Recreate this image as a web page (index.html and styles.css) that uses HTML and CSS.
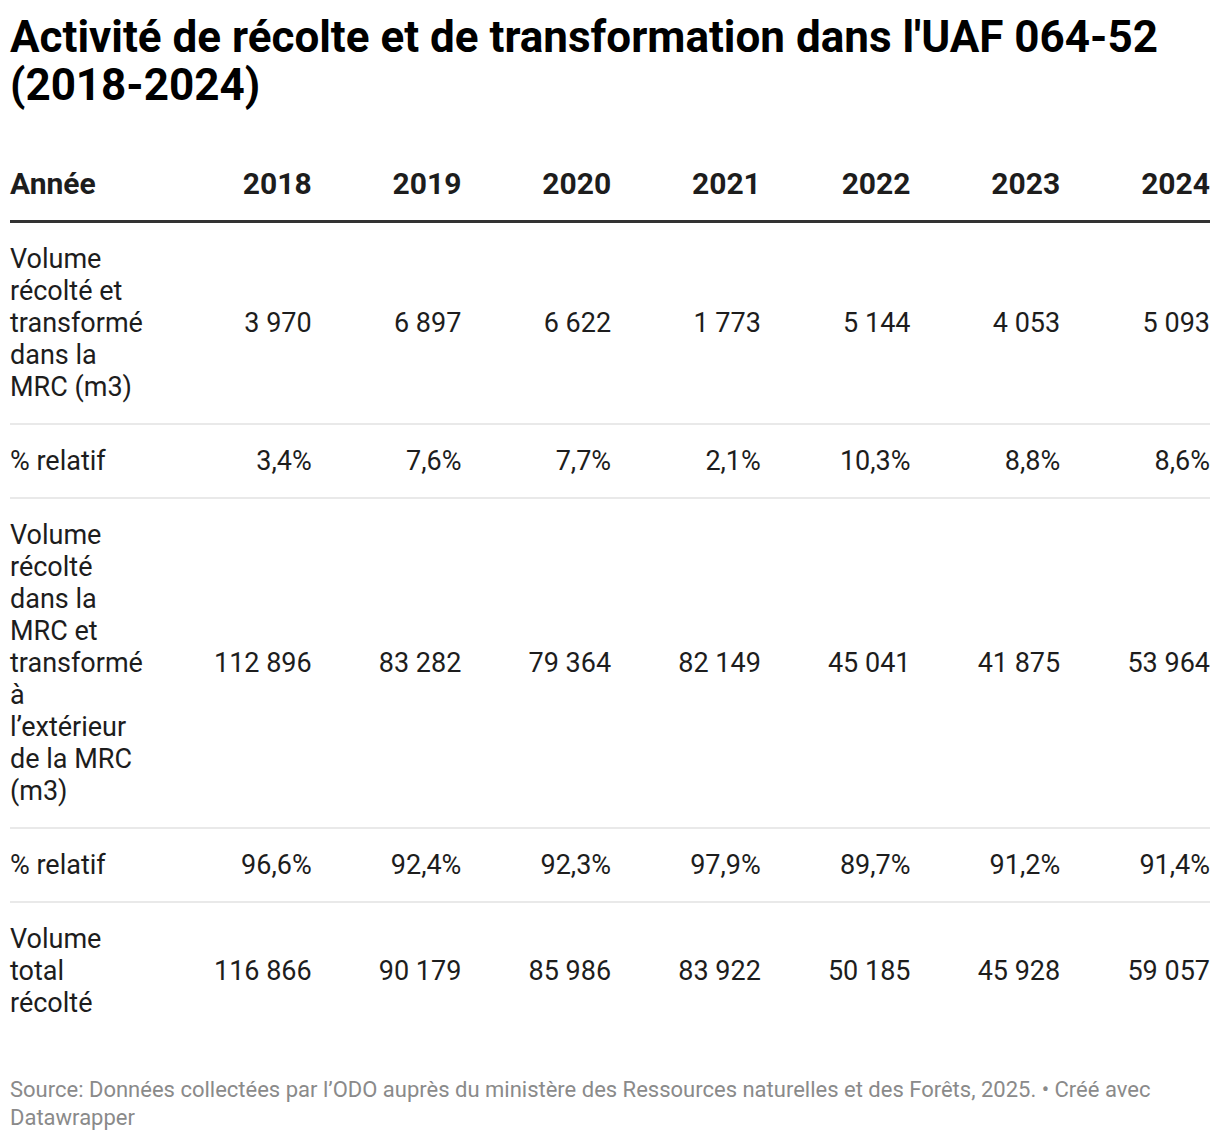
FILE: index.html
```html
<!DOCTYPE html>
<html lang="fr">
<head>
<meta charset="utf-8">
<title>Activité de récolte et de transformation</title>
<link rel="stylesheet" href="styles.css">
</head>
<body>
<div class="chart">
  <h1 class="title">Activité de récolte et de transformation dans l'UAF 064-52 (2018-2024)</h1>
  <table class="data">
    <colgroup>
      <col class="col-label">
      <col><col><col><col><col><col><col>
    </colgroup>
    <thead>
      <tr>
        <th class="label">Année</th>
        <th>2018</th><th>2019</th><th>2020</th><th>2021</th><th>2022</th><th>2023</th><th>2024</th>
      </tr>
    </thead>
    <tbody>
      <tr>
        <td class="label">Volume récolté et transformé dans la MRC (m3)</td>
        <td>3 970</td><td>6 897</td><td>6 622</td><td>1 773</td><td>5 144</td><td>4 053</td><td>5 093</td>
      </tr>
      <tr>
        <td class="label">% relatif</td>
        <td>3,4%</td><td>7,6%</td><td>7,7%</td><td>2,1%</td><td>10,3%</td><td>8,8%</td><td>8,6%</td>
      </tr>
      <tr>
        <td class="label">Volume récolté dans la MRC et transformé à l’extérieur de la MRC (m3)</td>
        <td>112 896</td><td>83 282</td><td>79 364</td><td>82 149</td><td>45 041</td><td>41 875</td><td>53 964</td>
      </tr>
      <tr>
        <td class="label">% relatif</td>
        <td>96,6%</td><td>92,4%</td><td>92,3%</td><td>97,9%</td><td>89,7%</td><td>91,2%</td><td>91,4%</td>
      </tr>
      <tr>
        <td class="label">Volume total récolté</td>
        <td>116 866</td><td>90 179</td><td>85 986</td><td>83 922</td><td>50 185</td><td>45 928</td><td>59 057</td>
      </tr>
    </tbody>
  </table>
  <p class="footer">Source: Données collectées par l’ODO auprès du ministère des Ressources naturelles et des Forêts, 2025. • Créé avec Datawrapper</p>
</div>
</body>
</html>
```

FILE: styles.css
```css
html, body {
  margin: 0;
  padding: 0;
  background: #ffffff;
}

body {
  font-family: Roboto, "Liberation Sans", Arial, sans-serif;
  color: #1d1d1d;
}

.chart {
  padding: 13px 10px 10px 10px;
}

.title {
  margin: 0 0 38px 0;
  font-size: 44px;
  line-height: 48px;
  font-weight: 700;
  color: #000000;
}

.data {
  width: 1200px;
  border-collapse: collapse;
  table-layout: fixed;
}

.col-label {
  width: 152px;
}

.data th,
.data td {
  text-align: right;
  vertical-align: middle;
  padding: 20px 0 20px 0;
  font-size: 27px;
  line-height: 32px;
}

.data th {
  font-size: 30px;
  font-weight: 700;
  color: #1d1d1d;
  padding: 21px 0 20px 0;
  border-bottom: 3px solid #333333;
}

.data .label {
  text-align: left;
  padding-right: 17px;
}

.data tbody tr {
  border-bottom: 2px solid #e9e9e9;
}

.data tbody tr:last-child {
  border-bottom: none;
}

.footer {
  margin: 37px 0 0 0;
  font-size: 22px;
  line-height: 28px;
  color: #8a8a8a;
  width: 1180px;
}
```
